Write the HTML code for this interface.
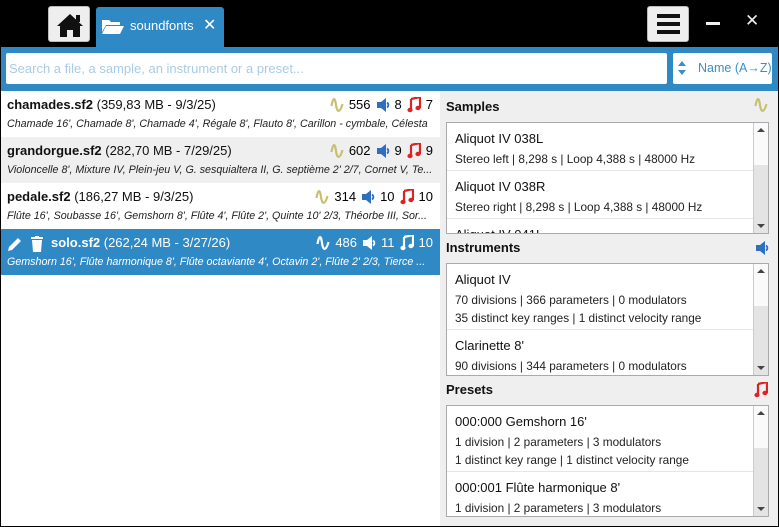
<!DOCTYPE html><html><head><meta charset="utf-8"><style>
*{box-sizing:border-box;margin:0;padding:0}
body{width:779px;height:527px;background:#000;font-family:"Liberation Sans","DejaVu Sans",sans-serif;overflow:hidden;position:relative}
.win{position:absolute;left:0;top:0;width:779px;height:527px;background:#000;border-radius:8px 8px 0 0}
.abs{position:absolute}
.btn{background:#eee;border-radius:3px;border:1px solid #bbb}
.blue{background:#2f89c5}
.row{position:absolute;left:1px;width:439px;height:46px;padding:4px 6px}
.t1{font-size:13px;color:#111;white-space:nowrap;height:20px;line-height:20px}
.t1 b{font-weight:bold}
.t2{font-size:10.7px;font-style:italic;color:#222;white-space:nowrap;line-height:18px;overflow:hidden}
.cnt{position:absolute;right:7px;top:4px;font-size:13px;line-height:20px;display:flex;align-items:center;gap:5px}
.cnt svg{display:block}
.hd{position:absolute;left:446px;font-size:13px;font-weight:bold;color:#111}
.box{position:absolute;left:446px;width:323px;background:#fff;border:1px solid #aaa;overflow:hidden}
.sb{position:absolute;right:0;top:0;bottom:0;width:15px;background:#e4e4e4;border-left:1px solid #ccc}
.sb:before{content:"";position:absolute;left:0;right:0;top:0;height:42px;background:#fafafa}
.sb i{position:absolute;left:3px;width:0;height:0;border-left:4px solid transparent;border-right:4px solid transparent}
.it{padding:5px 8px 2px;border-bottom:1px solid #e6e6e6;width:307px}
.it .a{font-size:13px;color:#111;line-height:22px}
.it .b{font-size:11.8px;color:#222;line-height:18px}
</style></head><body><div class="win">
<div class="abs btn" style="left:48px;top:6px;width:42px;height:36px"><svg width="42" height="36" viewBox="0 0 42 36"><path d="M8 19 L21 7 L34 19 L31 19 L31 30 L24 30 L24 23 L18 23 L18 30 L11 30 L11 19 Z" fill="#111"/><rect x="27" y="8" width="4" height="7" fill="#111"/></svg></div>
<div class="abs blue" style="left:96px;top:7px;width:128px;height:41px;border-radius:3px 3px 0 0"></div>
<svg class="abs" style="left:101px;top:18px" width="24" height="16" viewBox="0 0 24 16"><path d="M1 2h7l2 2h9v3H5L1 14Z" fill="#fff"/><path d="M5 8h18l-4 8H1Z" fill="#fff"/></svg>
<div class="abs" style="left:130px;top:18px;color:#fff;font-size:13px">soundfonts</div>
<div class="abs" style="left:203px;top:15px;color:#fff;font-size:16px;font-weight:bold">✕</div>
<div class="abs btn" style="left:647px;top:6px;width:42px;height:36px"><div class="abs" style="left:9px;top:7px;width:23px;height:4px;background:#111"></div><div class="abs" style="left:9px;top:15px;width:23px;height:4px;background:#111"></div><div class="abs" style="left:9px;top:23px;width:23px;height:4px;background:#111"></div></div>
<div class="abs" style="left:706px;top:22px;width:14px;height:3px;background:#eee"></div>
<div class="abs" style="left:745px;top:11px;color:#eee;font-size:17px;font-weight:bold">✕</div>
<div class="abs blue" style="left:1px;top:47px;width:777px;height:44px"></div>
<div class="abs" style="left:6px;top:53px;width:661px;height:31px;background:#fff;border-radius:2px;color:#a9cbe4;font-size:13px;line-height:31px;padding-left:3px">Search a file, a sample, an instrument or a preset...</div>
<div class="abs" style="left:673px;top:53px;width:99px;height:31px;background:#fff;border-radius:2px;color:#3a8fcb;font-size:12.5px;line-height:31px;padding-left:25px">Name (A→Z)</div>
<svg class="abs" style="left:677px;top:60px" width="10" height="16"><path d="M5 1L9 6H1Z M5 15L9 10H1Z" fill="#3a8fcb"/></svg>
<svg width="0" height="0" style="position:absolute"><defs>
<symbol id="w" viewBox="0 0 14 16"><path d="M1.5 9 C3 0 5 0 6 8 S10 16 12.5 7" fill="none" stroke="currentColor" stroke-width="2.2"/></symbol>
<symbol id="s" viewBox="0 0 14 16"><path d="M1 5h4l5-4v14l-5-4H1Z" fill="currentColor"/><path d="M11 5.5a3 3 0 0 1 0 5" fill="none" stroke="currentColor" stroke-width="1.8"/></symbol>
<symbol id="n" viewBox="0 0 14 16"><path d="M4 2l9-2v11" fill="none" stroke="currentColor" stroke-width="2.2"/><path d="M4 2v11" stroke="currentColor" stroke-width="2.2"/><ellipse cx="3" cy="13" rx="2.6" ry="2.2" fill="currentColor"/><ellipse cx="11" cy="11" rx="2.6" ry="2.2" fill="currentColor"/></symbol>
</defs></svg>
<div class="abs" style="left:1px;top:91px;width:439px;height:435px;background:#fff"></div>
<div class="row" style="top:91px;background:#fff"><div class="t1"><b>chamades.sf2</b> (359,83 MB - 9/3/25)</div><div class="t2">Chamade 16', Chamade 8', Chamade 4', Régale 8', Flauto 8', Carillon - cymbale, Célesta</div>
<div class="cnt"><svg width="14" height="16" style="color:#c8c070"><use href="#w"/></svg>556 <svg width="14" height="16" style="color:#2f6fc0"><use href="#s"/></svg>8 <svg width="14" height="16" style="color:#d22"><use href="#n"/></svg>7</div></div>
<div class="row" style="top:137px;background:#efefef"><div class="t1"><b>grandorgue.sf2</b> (282,70 MB - 7/29/25)</div><div class="t2">Violoncelle 8', Mixture IV, Plein-jeu V, G. sesquialtera II, G. septième 2' 2/7, Cornet V, Te...</div>
<div class="cnt"><svg width="14" height="16" style="color:#c8c070"><use href="#w"/></svg>602 <svg width="14" height="16" style="color:#2f6fc0"><use href="#s"/></svg>9 <svg width="14" height="16" style="color:#d22"><use href="#n"/></svg>9</div></div>
<div class="row" style="top:183px;background:#fff"><div class="t1"><b>pedale.sf2</b> (186,27 MB - 9/3/25)</div><div class="t2">Flûte 16', Soubasse 16', Gemshorn 8', Flûte 4', Flûte 2', Quinte 10' 2/3, Théorbe III, Sor...</div>
<div class="cnt"><svg width="14" height="16" style="color:#c8c070"><use href="#w"/></svg>314 <svg width="14" height="16" style="color:#2f6fc0"><use href="#s"/></svg>10 <svg width="14" height="16" style="color:#d22"><use href="#n"/></svg>10</div></div>
<div class="row" style="top:229px;background:#2f89c5;color:#fff"><div class="t1" style="color:#fff;padding-left:44px"><b>solo.sf2</b> (262,24 MB - 3/27/26)</div><div class="t2" style="color:#fff">Gemshorn 16', Flûte harmonique 8', Flûte octaviante 4', Octavin 2', Flûte 2' 2/3, Tierce ...</div>
<div class="cnt" style="color:#fff"><svg width="14" height="16"><use href="#w"/></svg>486 <svg width="14" height="16"><use href="#s"/></svg>11 <svg width="14" height="16"><use href="#n"/></svg>10</div>
<svg class="abs" style="left:6px;top:7px" width="16" height="16" viewBox="0 0 16 16"><path d="M1 15l1-4 9-9 3 3-9 9Z" fill="#fff"/></svg>
<svg class="abs" style="left:30px;top:7px" width="12" height="16" viewBox="0 0 12 16"><rect x="0" y="1" width="12" height="2" fill="#fff"/><rect x="4" y="0" width="4" height="2" fill="#fff"/><path d="M1 4h10l-1 12H2Z" fill="#fff"/></svg></div>
<div class="abs" style="left:440px;top:91px;width:338px;height:435px;background:#efefef"></div>
<div class="hd" style="top:99px">Samples</div><svg class="abs" style="left:754px;top:97px;color:#c8c070" width="14" height="16"><use href="#w"/></svg>
<div class="box" style="top:122px;height:112px"><div class="it"><div class="a">Aliquot IV 038L</div><div class="b">Stereo left | 8,298 s | Loop 4,388 s | 48000 Hz</div></div><div class="it"><div class="a">Aliquot IV 038R</div><div class="b">Stereo right | 8,298 s | Loop 4,388 s | 48000 Hz</div></div><div class="it"><div class="a">Aliquot IV 041L</div></div><div class="sb"><i style="top:5px;border-bottom:4px solid #444"></i><i style="bottom:5px;border-top:4px solid #444"></i></div></div>
<div class="hd" style="top:240px">Instruments</div><svg class="abs" style="left:755px;top:240px;color:#2f6fc0" width="14" height="16"><use href="#s"/></svg>
<div class="box" style="top:263px;height:113px"><div class="it"><div class="a">Aliquot IV</div><div class="b">70 divisions | 366 parameters | 0 modulators</div><div class="b">35 distinct key ranges | 1 distinct velocity range</div></div><div class="it"><div class="a">Clarinette 8'</div><div class="b">90 divisions | 344 parameters | 0 modulators</div></div><div class="sb"><i style="top:5px;border-bottom:4px solid #444"></i><i style="bottom:5px;border-top:4px solid #444"></i></div></div>
<div class="hd" style="top:382px">Presets</div><svg class="abs" style="left:754px;top:382px;color:#d22" width="14" height="16"><use href="#n"/></svg>
<div class="box" style="top:405px;height:112px"><div class="it"><div class="a">000:000 Gemshorn 16'</div><div class="b">1 division | 2 parameters | 3 modulators</div><div class="b">1 distinct key range | 1 distinct velocity range</div></div><div class="it"><div class="a">000:001 Flûte harmonique 8'</div><div class="b">1 division | 2 parameters | 3 modulators</div></div><div class="sb"><i style="top:5px;border-bottom:4px solid #444"></i><i style="bottom:5px;border-top:4px solid #444"></i></div></div>
</div></body></html>
